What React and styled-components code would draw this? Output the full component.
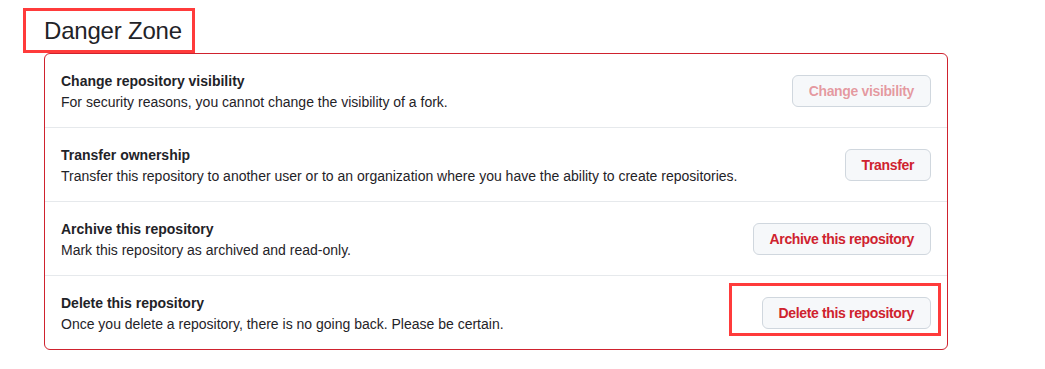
import React from 'react'
import styled, { createGlobalStyle } from 'styled-components'

const GlobalStyle = createGlobalStyle`
    body {
        margin: 0;
        background: #ffffff;
        font-family: "Liberation Sans", Arial, sans-serif;
        color: #1f2328;
    }
`

const settings = [
    {
        title: 'Change repository visibility',
        text: 'For security reasons, you cannot change the visibility of a fork.',
        action: 'Change visibility',
        disabled: true,
    },
    {
        title: 'Transfer ownership',
        text: 'Transfer this repository to another user or to an organization where you have the ability to create repositories.',
        action: 'Transfer',
    },
    {
        title: 'Archive this repository',
        text: 'Mark this repository as archived and read-only.',
        action: 'Archive this repository',
    },
    {
        title: 'Delete this repository',
        text: 'Once you delete a repository, there is no going back. Please be certain.',
        action: 'Delete this repository',
        marked: true,
    },
]

function App() {
    return (
        <Page>
            <GlobalStyle />
            <Heading>Danger Zone</Heading>
            <Card>
                {settings.map((item, index) => (
                    <Row key={index}>
                        <Info>
                            <Title>{item.title}</Title>
                            <Text>{item.text}</Text>
                        </Info>
                        <Action marked={item.marked}>
                            <DangerButton disabled={item.disabled}>{item.action}</DangerButton>
                        </Action>
                    </Row>
                ))}
            </Card>
        </Page>
    )
}

const Page = styled.div`
    width: 1045px;
    height: 369px;
    padding: 8px 0 0 0;
    box-sizing: border-box;
`

const Heading = styled.h2`
    margin: 0 0 0 23px;
    width: 172px;
    height: 45px;
    box-sizing: border-box;
    border: 3px solid #ff3b3b;
    padding: 0 0 0 18px;
    display: flex;
    align-items: center;
    font-size: 24px;
    font-weight: 400;
    letter-spacing: -0.2px;
    color: #1f2328;
`

const Card = styled.div`
    margin-left: 44px;
    width: 904px;
    box-sizing: border-box;
    border: 1px solid #cf222e;
    border-radius: 6px;
`

const Row = styled.div`
    display: flex;
    align-items: center;
    justify-content: space-between;
    padding: 17px 16px 14px;
    border-top: 1px solid #e6e9ec;
    &:first-child {
        border-top: none;
    }
`

const Info = styled.div`
    display: flex;
    flex-direction: column;
`

const Title = styled.strong`
    font-size: 14px;
    font-weight: 600;
    line-height: 21px;
`

const Text = styled.p`
    margin: 0;
    font-size: 14px;
    line-height: 21px;
`

const Action = styled.div`
    position: relative;
    display: flex;
    margin-top: -2px;
    &::before {
        content: '';
        display: ${props => props.marked ? 'block' : 'none'};
        position: absolute;
        top: -14px;
        right: -10px;
        bottom: -7px;
        left: -33px;
        border: 3px solid #ff3b3b;
        pointer-events: none;
    }
`

const DangerButton = styled.button`
    height: 32px;
    padding: 0 16px;
    border: 1px solid #d0d7de;
    border-radius: 6px;
    background: #f6f8fa;
    color: ${props => props.disabled ? 'rgba(207, 34, 46, 0.45)' : '#cf222e'};
    font-family: inherit;
    font-size: 14px;
    font-weight: 600;
    letter-spacing: -0.35px;
    white-space: nowrap;
`

export default App
